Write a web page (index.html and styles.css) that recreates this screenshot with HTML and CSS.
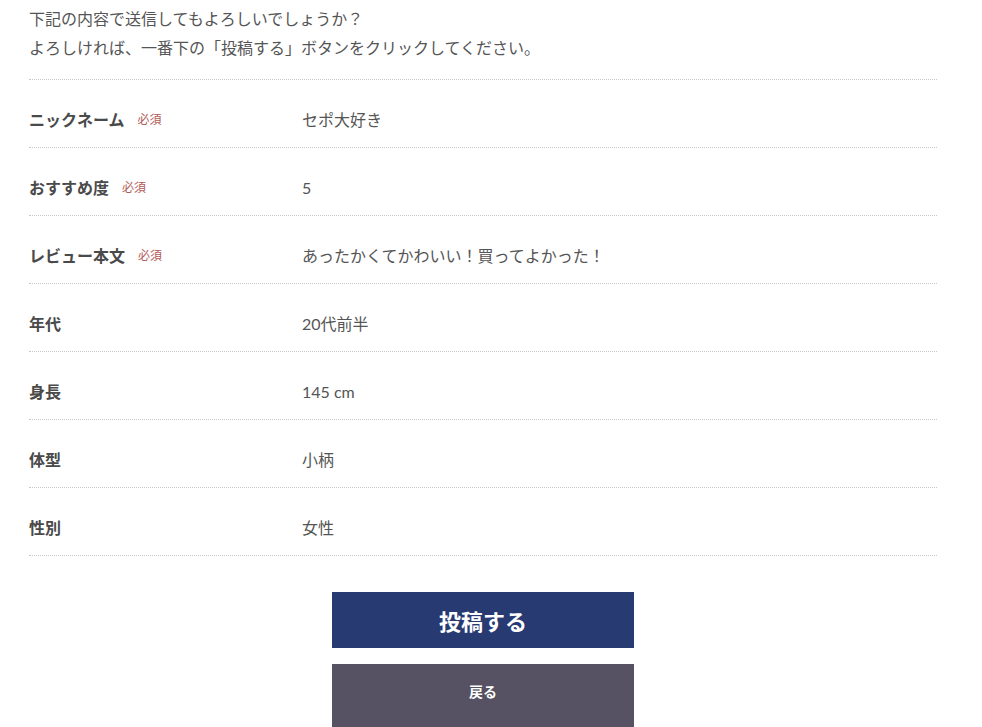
FILE: index.html
```html
<!DOCTYPE html>
<html lang="ja">

<head>
    <meta charset="UTF-8">
    <meta name="viewport" content="width=device-width, initial-scale=1.0">
    <title>レビュー投稿 確認</title>
    <link rel="stylesheet" href="styles.css">
</head>

<body>

    <div class="confirm">
        <p class="confirm-lead">
            下記の内容で送信してもよろしいでしょうか？<br>
            よろしければ、一番下の「投稿する」ボタンをクリックしてください。
        </p>

        <dl class="confirm-list">
            <div class="confirm-row">
                <dt>ニックネーム<span class="required">必須</span></dt>
                <dd>セポ大好き</dd>
            </div>
            <div class="confirm-row">
                <dt>おすすめ度<span class="required">必須</span></dt>
                <dd>5</dd>
            </div>
            <div class="confirm-row">
                <dt>レビュー本文<span class="required">必須</span></dt>
                <dd>あったかくてかわいい！買ってよかった！</dd>
            </div>
            <div class="confirm-row">
                <dt>年代</dt>
                <dd>20代前半</dd>
            </div>
            <div class="confirm-row">
                <dt>身長</dt>
                <dd>145 cm</dd>
            </div>
            <div class="confirm-row">
                <dt>体型</dt>
                <dd>小柄</dd>
            </div>
            <div class="confirm-row">
                <dt>性別</dt>
                <dd>女性</dd>
            </div>
        </dl>

        <div class="confirm-actions">
            <button type="button" class="btn btn-submit">投稿する</button>
            <button type="button" class="btn btn-back">戻る</button>
        </div>
    </div>

</body>

</html>
```

FILE: styles.css
```css
* {
    box-sizing: border-box;
}

body {
    font-family: 'Lato', 'Noto Sans CJK JP', sans-serif;
    margin: 0;
    padding: 0;
    color: #555;
    background-color: white;
}

.confirm {
    width: 908px;
    margin-left: 29px;
}

.confirm-lead {
    margin: 0;
    padding-top: 4px;
    padding-bottom: 17px;
    font-size: 16px;
    line-height: 29px;
    border-bottom: 1px dotted #c8c8c8;
}

.confirm-list {
    margin: 0;
}

.confirm-row {
    display: flex;
    align-items: center;
    height: 68px;
    padding-top: 12px;
    border-bottom: 1px dotted #c8c8c8;
}

.confirm-row dt {
    display: flex;
    align-items: center;
    width: 273px;
    flex-shrink: 0;
    font-size: 16px;
    line-height: 24px;
    font-weight: 700;
    color: #4a4a4a;
}

.confirm-row dd {
    margin: 0;
    font-size: 16px;
    line-height: 24px;
}

.required {
    margin-left: 13px;
    font-size: 12px;
    font-weight: 400;
    color: #b35a57;
}

.confirm-actions {
    display: flex;
    flex-direction: column;
    align-items: center;
    gap: 16px;
    margin-top: 36px;
}

.btn {
    width: 302px;
    border: none;
    color: white;
    font-family: inherit;
    font-weight: 700;
    cursor: pointer;
}

.btn-submit {
    height: 56px;
    background-color: #283a72;
    font-size: 22px;
}

.btn-back {
    padding: 17px 0 31px;
    line-height: 22px;
    background-color: #565263;
    font-size: 14px;
}
```
